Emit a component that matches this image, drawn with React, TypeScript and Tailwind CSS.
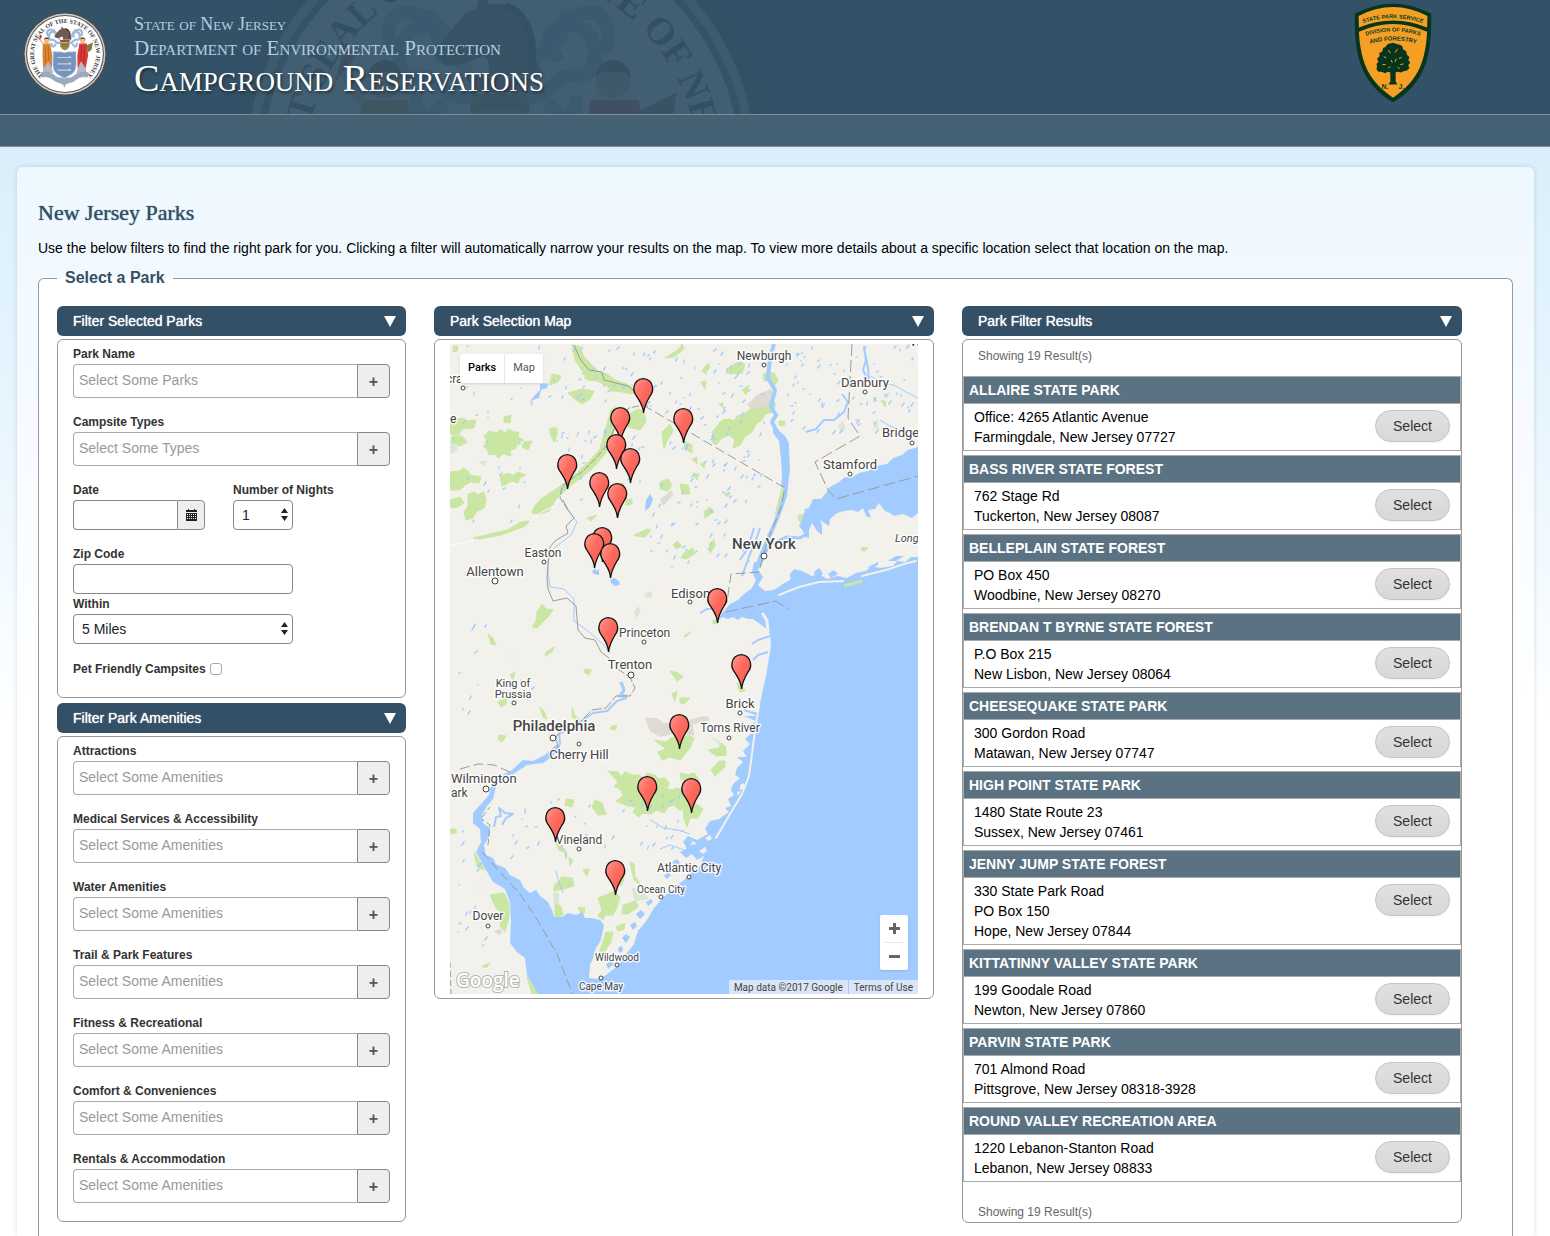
import type { ReactNode } from "react";

interface Park { name: string; lines: string[]; }

const PARKS: Park[] = [
  { name: "ALLAIRE STATE PARK", lines: ["Office: 4265 Atlantic Avenue", "Farmingdale, New Jersey 07727"] },
  { name: "BASS RIVER STATE FOREST", lines: ["762 Stage Rd", "Tuckerton, New Jersey 08087"] },
  { name: "BELLEPLAIN STATE FOREST", lines: ["PO Box 450", "Woodbine, New Jersey 08270"] },
  { name: "BRENDAN T BYRNE STATE FOREST", lines: ["P.O Box 215", "New Lisbon, New Jersey 08064"] },
  { name: "CHEESEQUAKE STATE PARK", lines: ["300 Gordon Road", "Matawan, New Jersey 07747"] },
  { name: "HIGH POINT STATE PARK", lines: ["1480 State Route 23", "Sussex, New Jersey 07461"] },
  { name: "JENNY JUMP STATE FOREST", lines: ["330 State Park Road", "PO Box 150", "Hope, New Jersey 07844"] },
  { name: "KITTATINNY VALLEY STATE PARK", lines: ["199 Goodale Road", "Newton, New Jersey 07860"] },
  { name: "PARVIN STATE PARK", lines: ["701 Almond Road", "Pittsgrove, New Jersey 08318-3928"] },
  { name: "ROUND VALLEY RECREATION AREA", lines: ["1220 Lebanon-Stanton Road", "Lebanon, New Jersey 08833"] },
];

const AMENITIES = [
  "Attractions",
  "Medical Services & Accessibility",
  "Water Amenities",
  "Trail & Park Features",
  "Fitness & Recreational",
  "Comfort & Conveniences",
  "Rentals & Accommodation",
];

// pin tips in map units
const PINS = [
  [643, 413], [620, 442], [683, 443], [616, 469], [630, 483], [567, 489], [599, 507],
  [617, 518], [602, 562], [594, 568], [610, 578], [608, 652], [717, 623], [741, 689],
  [679, 749], [647, 811], [691, 813], [555, 842], [615, 895],
];

type Anchor = "start" | "middle";
interface Place { t: string; x: number; y: number; s: number; a?: Anchor; w?: number; it?: boolean; dot?: number[]; }

const PLACES: Place[] = [
  { t: "Newburgh", x: 764, y: 360, s: 12, dot: [764, 365] },
  { t: "Danbury", x: 865, y: 387, s: 13, dot: [865, 392] },
  { t: "Bridge", x: 882, y: 437, s: 13, a: "start", dot: [912, 443] },
  { t: "Stamford", x: 850, y: 469, s: 13, dot: [850, 474] },
  { t: "New York", x: 764, y: 549, s: 15, w: 500, dot: [764, 556, 3] },
  { t: "Long", x: 895, y: 542, s: 11, a: "start", it: true },
  { t: "cra", x: 446, y: 383, s: 12, a: "start", dot: [463, 388] },
  { t: "e", x: 450, y: 423, s: 12, a: "start" },
  { t: "W", x: 910, y: 346, s: 13, a: "start" },
  { t: "Easton", x: 543, y: 557, s: 12, dot: [544, 562] },
  { t: "Allentown", x: 495, y: 576, s: 13, dot: [495, 581, 3] },
  { t: "Edison", x: 671, y: 598, s: 13, a: "start", dot: [690, 602] },
  { t: "Princeton", x: 619, y: 637, s: 12, a: "start", dot: [644, 642] },
  { t: "Trenton", x: 630, y: 669, s: 13, dot: [631, 675, 3] },
  { t: "King of", x: 513, y: 687, s: 11 },
  { t: "Prussia", x: 513, y: 698, s: 11, dot: [514, 703] },
  { t: "Philadelphia", x: 554, y: 731, s: 15, w: 500, dot: [553, 738, 3] },
  { t: "Cherry Hill", x: 579, y: 759, s: 13, dot: [579, 744] },
  { t: "Wilmington", x: 451, y: 783, s: 13, a: "start", dot: [486, 789, 3] },
  { t: "ark", x: 451, y: 797, s: 12, a: "start" },
  { t: "Brick", x: 740, y: 708, s: 13, dot: [740, 713] },
  { t: "Toms River", x: 730, y: 732, s: 12, dot: [729, 738] },
  { t: "Vineland", x: 579, y: 844, s: 12, dot: [579, 849] },
  { t: "Atlantic City", x: 689, y: 872, s: 12, dot: [689, 877] },
  { t: "Ocean City", x: 661, y: 893, s: 10, dot: [661, 897] },
  { t: "Dover", x: 488, y: 920, s: 12, dot: [488, 926] },
  { t: "Wildwood", x: 617, y: 961, s: 10, dot: [617, 965] },
  { t: "Cape May", x: 601, y: 990, s: 10, dot: [601, 978] },
];

const GREENS = [
  // northwest woods
  "M572 345l8 2 4 10 8 8 6 6 9 3 8 6 12 4 8 6 -3 4 -9 -2 -9 -1 -9 -6 -8 -4 -9 -1 -5 -8 -8 -12z",
  "M611 410l5-3 4 10 -6 14 -8 22 -14 16 -18 14 -18 16 -7 12 -8 3 -9-1 2-6 7-8 18-12 18-14 14-14 9-10z",
  "M628 415l10-6 6 3 2 10 -6 8 -8-2 -10-3z",
  "M568 393l14-4 12 2 -4 8 -8 5 -6-4z", "M552 374l9 2 -3 6 -8 3z", "M585 374l8 0 -2 6 -6-1z", "M606 383l11 3 -5 6z",
  "M450 420l12-2 6 3 8-1 -2 8 -12 1 -3 6 -9-1z", "M452 436l10 0 5 6 -7 4 -9-3z",
  "M484 436l5-5 7 2 4-3 6 3 2-4 6 3 5 0 -1 5 6 3 -6 3 -3 6 -5 1 1 6 -8-2 -5 4 -3-4 -6 1 -2-6 -4-3 5-3z",
  "M504 417l7-2 -1 8 -6-1z", "M550 428l7 0 0 7 -3 7 -4-8z", "M524 442l8-1 -4 9 -6-3z",
  "M450 472l10-1 3-3 5 3 2 4 11 2 -2 6 -8-1 -6 3 -5 5 -10 0z",
  "M468 494l7-2 2 3 7-3 2 8 -2 8 -8 4 -3 6 -7 2 -2-8 4-6z", "M500 476l10-3 2 3 6-4 8 3 -6 3 -2 5 -6-2 -10 5z",
  "M450 500l10-3 4 6 -8 5 -6-1z",
  "M473 538l34-8 14-8 9-1 -5 5 -24 9 -22 4z",
  "M537 612l5-8 4 5 7 1 -6 8 -10 10 -5-1 4-6z", "M488 634l5 4 3 7 -5-1z", "M546 652l8-5 -2 5 -7 4z",
  "M453 346l5 0 -1 5 -4 1z", "M520 358l6-2 1 5z",
  // north central
  "M665 358l14-9 3-5 2 5 -10 8z", "M662 432l8-8 3 7 -6 10 -3 8z", "M684 441l8 4 0 8 -7-4z", "M660 482l8-3 4 6 -4 6 -8-2z",
  "M680 484l8 1 2 9 -8 0z", "M634 535l13-6 4 1 -6 7 -8-1z", "M673 545l4-4 5 5 -6 3z", "M684 553l9-5 2 6 -9 5 -5-1z",
  "M587 518l10-3 -6 6z", "M618 484l6-1 -2 5z", "M626 500l6-1 0 5 -6 1z", "M704 512l6-5 4 5 -9 6z", "M709 545l5-6 1 7 -5 7z",
  "M701 382l5-1 -1 8z", "M719 404l4-1 0 5z", "M726 369l12-7 7 2 -3 9 -12 1z", "M702 371l6-8 2 5 -5 5z", "M742 390l7-5 -3 10z",
  "M712 432l7-8 3-4 8-1 4 2 3-5 6-1 6-5 5-6 8-2 6-4 8 6 -3 8 -8 2 -3 6 -6 4 -4 8 -7 5 -5 8 -7 3 2-8 -6-5 -7 3 -6 7 -4-3 2-6z",
  "M764 373l10 0 4 7 -5 8 -3-7 -7-2z", "M779 421l6 0 -1 5 -5-1z", "M881 400l5 2 -1 5z", "M798 516l6-2 0 8 -5-1z", "M860 503l6-1 -1 6 -4 0z",
  "M862 547l6 1 -3 3 -4-1z", "M906 562l12-5 0 3z", "M782 488l2 0 -3 15 -6 12z",
  "M692 459l5-2 0 7z", "M700 464l5-2 -1 6z", "M722 492l7 2 -1 3z", "M693 473l6 1 -2 6z",
  // south
  "M572 708l3 8 5 4 -3 3 -5-7z", "M540 707l4 4 3 8 -4-2z", "M585 669l6 1 -2 5 -5-3z", "M498 702l9-5 -1 7 -5 3z", "M612 726l5-1 -2 5 -5-1z",
  "M499 735l7 1 -4 6 -4-3z", "M510 675l5-3 -2 8z", "M670 671l8 2 5 4 -6 4z", "M680 698l10 0 -6 6 -4-1z", "M672 694l5-3 -2 10z",
  "M654 740l12 2 6-5 8 4 8-6 6 3 -4 10 -10 12 -10-3 -8 3 -4-8 8-3z",
  "M608 771l10 1 3 5 4-5 8 3 6 0 5 3 3-5 8 2 4 4 6-1 4 5 -2 6 6 1 3-2 6 1 3 4 6 0 -2 5 3 5 -5 6 -8 1 -5-5 -6 2 -4 6 -7-3 -6 4 -9-1 -3 4 -6-5 3-5 -8-1 -12-5 7-5 -2-6 -7-4 4-4z",
  "M683 807l5-8 7 4 8 6 -5 9 -8 0 -3 9 -3-8z", "M708 750l11-2 2-5 5 4 0 8 -10 1z", "M711 770l8-9 6 0 0 6 -10 9z", "M680 773l8 2 6-2 5 6 -10-1 -8 2z",
  "M595 800l7 3 4 11 -8 1 -6-8z", "M566 799l8 1 -2 7 -7-2z", "M555 842l6 2 3 8 -5-2z", "M564 848l3 7 -1 4z",
  "M554 886l8-9 10 1 2 8 -11 3 -9 2z", "M555 902l6 5 2 8 -8 3z", "M578 907l7 1 -2 10z", "M583 870l6-1 -2 7z", "M569 857l4 3 -3 6z",
  "M598 898l8-3 8-4 6 6 -3 10 -4 8 -8 0 -2 5 -5-4 4-6z", "M623 905l13-4 2 6 -10 7 -6 0z", "M616 927l9-4 -1 6 -6 2z", "M606 932l7 0 -2 10 -8 12 -5 1 4-10z",
  "M612 884l12-6 -2 7z", "M630 862l4 2 1 12 5 8 -6-4z",
  "M490 895l14-2 5 10 0 14 -4 15 -5-6 3-12 -7-6z", "M474 852l6 10 5 8 -8-3z", "M527 977l11 17 -6 0z", "M450 829l6 0 0 4 -6 1z", "M482 966l8-3 -4 5z",
  "M737 683l4 1 4 7 -5 1z", "M713 620l6 0 -1 3 -5 1z", "M684 636l7-4 -5 5z",
];

const TOWNLAND = [
  "M747 405l10-10 14-6 3 6 -8 12 -14 2z", "M660 499l12-9 1 5 -10 11z", "M645 718l12 0 6 5 12 0 14-3 14-4 6 1 0 4 -16 3 1 12 -14-4 -20 5 -10-6z",
  "M494 931l6-2 3 4 -4 2z",
];

const PALE = [
  "M838 425l5-4 3 8 -5 4z", "M873 421l5-1 0 9 -4-1z", "M634 611l4-5 3 6 -5 6z", "M644 594l8-3 0 6 -6 1z", "M631 887l12 4 6 8 -14 2z", "M553 892l6 1 0 12 -5-1z",
  "M708 734l12 8 1 4z", "M450 445l7-2 0 8 -7 3z", "M478 462l9-2 -2 6z",
];

const OCEAN = [
  // Raritan Bay and the Jersey shore
  "M717 622L722 617L728 619L733 617L738 620L742 617L748 619L753 619L760 624L767 629L770 634L771 645L769 658L766 676L762 694L758 713",
  // mainland side of Barnegat Bay
  "L751 711L756 716L744 716L756 721L750 726L753 732L745 739L750 744L743 751L747 757L737 757L743 762L737 768L735 775L740 778L733 784L731 790L734 795L728 799L731 806L725 808L729 812L719 819L710 821L705 829L708 834L697 840L688 836",
  // Great Bay down to Cape May
  "L683 842L688 848L680 852L686 858L692 854L697 860L704 856L700 866L692 872L684 880L672 889L662 899L654 908L647 920L638 931L634 944L624 957L616 967L606 975L598 979L589 978",
  // Delaware Bay, east side
  "L590 965L593 958L596 948L600 942L602 935L604 925L600 920L592 918L585 918L582 912L576 915L568 913L562 917L554 917L552 910L548 902L540 896L536 890L530 893L524 888L520 880L510 875L505 868L496 864L493 858L486 855",
  // up the Delaware to Philadelphia
  "L484 845L489 837L490 828L483 823L482 815L487 806L493 799L496 787L500 778L512 775L527 765L543 763L552 757L560 749L556 745L545 755L533 761L523 760L512 770L500 776L490 788L489 795L480 805L473 813L473 823L480 829L481 842L476 852",
  // Delaware Bay, west side
  "L483 865L493 882L505 889L510 902L511 922L510 943L517 952L525 958L527 975L538 994L918 994L918 557",
  // south shore of Long Island and the harbour
  "L911 557L905 562L897 561L893 566L880 568L872 566L866 571L856 573L847 578L838 576L827 579L819 574L812 576L804 572L793 573L790 580L783 584L774 590L765 591L758 585L763 577L758 570L762 562L754 562L752 572L756 580L752 588L744 594L738 600L730 604L722 613Z",
].join("");

const SOUND =
  "M918 447l-10 3 -6 5 -9 3 -6 6 -11 2 -8 5 -9 2 -8 5 -6-1 -6 5 -9 5 -4 6 -5 6 -8 0 -4 9 -4 1 -2 9 -4 8 4 5 2 6 4 1 0-8 3-7 5 8 5 4 0-10 -2-5 9 6 1-7 7-6 7-2 8-1 6 2 5-4 3 8 5 2 -3-8 7-1 4-6 6 8 5 2 4 3 9-2 9 4 6-5z";

const HUDSON = "M774 344l-4 14 -2 20 7 12 -4 17 5 8 -4 7 5 10 8 8 2 8 1 20 -3 28 -9 25 -12 27 -6 16";

const HUDSON_WIDE = "M773 425l6 6 6 5 4 7 0 25 -3 20 -5-1 1-12 -1-16 -2-18 -6-8z";

// inland lakes and streams, scattered the same way on every render
function lakes() {
  const out: string[] = [];
  let seed = 7;
  const rnd = () => { seed = (seed * 16807) % 2147483647; return seed / 2147483647; };
  const scatter = (n: number, x: number, y: number, w: number, h: number) => {
    for (let i = 0; i < n; i++) {
      const px = Math.round(x + rnd() * w);
      const py = Math.round(y + rnd() * h);
      const a = Math.ceil(rnd() * 3);
      const b = Math.ceil(rnd() * 4);
      out.push(`M${px} ${py}l${a} ${-b}l1 1l${-a} ${b}z`);
    }
  };
  scatter(60, 453, 346, 170, 100);
  scatter(110, 625, 348, 140, 160);
  scatter(70, 785, 346, 130, 90);
  scatter(35, 650, 500, 100, 70);
  scatter(20, 453, 440, 130, 90);
  scatter(25, 590, 790, 100, 60);
  scatter(20, 510, 800, 80, 60);
  scatter(16, 455, 830, 30, 130);
  scatter(14, 455, 600, 90, 130);
  return out.join("");
}

const LAKES = lakes();

function ParkMap() {
  return (
    <svg viewBox="450 344 468 650" className="block w-full" role="img" aria-label="Map of New Jersey state parks">
      <defs>
        <linearGradient id="pin" x1="0" y1="0" x2="1" y2="1">
          <stop offset="0" stopColor="#ff9a90" />
          <stop offset="0.45" stopColor="#fd6a5f" />
          <stop offset="1" stopColor="#f8574c" />
        </linearGradient>
      </defs>
      <rect x="450" y="344" width="468" height="650" fill="#f2f1ec" />
      <g fill="#cae6a3" stroke="#cae6a3" strokeWidth="1" strokeLinejoin="round">
        {GREENS.map((d, i) => <path key={i} d={d} />)}
      </g>
      <g fill="#dfdad2">{TOWNLAND.map((d, i) => <path key={i} d={d} />)}</g>
      <g fill="#dbe6d4">{PALE.map((d, i) => <path key={i} d={d} />)}</g>

      <g fill="#a2ccff">
        <path d={OCEAN} />
        <path d={SOUND} />
        <path d={HUDSON_WIDE} />
        <path d={LAKES} />
        <path d="M610 580l4-2 5 3 1 4 -5 1 -4-3z M592 572l3-4 2 3 2-2 0 6 -5-1z" />
        <path d="M535 395l5-5 0-6 9-1 1-5 -3 10 -6 2 -2 8 -6 2 -4 3z" />
        <path d="M646 500l4-6 3 5 -3 8 -5 4z" />
      </g>
      <g fill="none" stroke="#a2ccff" strokeLinejoin="round">
        <path d={HUDSON} strokeWidth="4" />
        <path d="M808 533l-8 5 -14-1 -8 4 -8 4 -5 8 -6 14" strokeWidth="3" />
        <path d="M742 576l8-22 6-14 4-12 M740 560l8-12 6-20" strokeWidth="2" />
        <path d="M715 609l-8 0 -7 4" strokeWidth="2" />
        <path d="M864 346l2 14 -3 10 6 12 -1-14 -4-20 M806 432l10-3 8-9 10 0 10-8 4-10 -6-8" strokeWidth="2" />
        <path d="M870 376l12 6 14 4 10 6 12 6 M880 420l10 6 14 6" strokeWidth="1" />
        <path d="M558 750l2-8 -1-8 6-3 13-5 5-6 10-7 14-2 10-10 10-3" strokeWidth="2" />
        <path d="M621 682l3 8 -4 6 7 0" strokeWidth="3" />
        <path d="M494 827l2-10 5-1 -2-8 6 5 8 1 -7 4 -4 7" strokeWidth="2" />
        <path d="M756 714l-12-4 M770 636l-12 4 -6 4 M768 652l-10 3 -5 5" strokeWidth="2" />
        <path d="M690 834l-12-4 -14-2 -14-8 M684 850l-14-5 -10 4 M563 893l-5-14 -2-8" strokeWidth="1" />
        <path d="M568 510l9 12 -6 13 -18 14 -5 12 0 12 2 14 14 2 10 10 0 22 14 10 16 14 6 8" strokeWidth="1" />
      </g>

      {/* barrier islands */}
      <g fill="none" stroke="#f2f1ec" strokeLinecap="round">
        <path d="M763 614l4 7 1 10" strokeWidth="3" />
        <path d="M759 706l-4 24 -3 24 -3 22 -7 18 -12 20 -14 24" strokeWidth="2" />
        <path d="M779 595l20-8 20-5 24-1 M862 576l24-6 18-6 12-3" strokeWidth="2" />
      </g>
      <path d="M844 586l18-5" stroke="#cae6a3" strokeWidth="3" />
      <g fill="#a2ccff">
        <path d="M790 574l4-5 8 2 6 5 -4 6 -8 2 -5-3z M814 572l5-4 4 5 -3 5 -5-1z M828 574l6-4 4 4 -7 4z M868 567l10-5 0 3 -8 4z M888 561l8-5 8 0 -8 5z" />
        <path d="M636 914l5-4 4 4 -5 5z M630 925l5-3 2 4 -4 4z M622 938l4-4 4 3 -4 6z M618 948l4-2 1 5 -4 2z M606 964l5-3 3 3 -6 5z M646 902l5-3 2 3 -5 4z M684 842l8-2 2 6 -7 4z M672 862l5-3 4 5 -6 3z M664 876l4-4 3 3 -4 4z" />
      </g>
      <g fill="#f2f1ec">
        <path d="M705 838l5-3 2 4 -4 2z M699 851l6-4 2 4 -4 3z M690 845l3-4 4 3z M740 785l4-2 1 5 -5 2z M737 792l4-1 -3 5z" />
      </g>

      {/* state lines */}
      <g fill="none" stroke="#9b9b9b" strokeWidth="1">
        <path d="M574 345l6 14 9 11 13 2 2 8 12 3 12 3 6 5" />
        <path d="M568 510l-8-12 2-12 8-6 12-8 14-14 12-14 8-20 4-8 9-8 14-3 8 1" strokeDasharray="7 2" />
        <path d="M563 500l5 10 6 8 -8 8 2 7 -13 8 -5 6 -2 18 -1 14 1 10 5 12 14-3 9 8 2 24 7 8 10 2 6 12 12 9" />
        <path d="M616 668l14 9 5 11 -5 8 -14 0 -10 12 -14 2 -12 12 -16 5 -8 10 2 12" strokeDasharray="10 2" />
        <path d="M643 405l142 83 -4 20 -14 34 -8 30 -28 2 -4 28" strokeDasharray="10 4" />
        <path d="M852 344l-4 74 12 18 -45 26 13 28 8 9 82-23" strokeDasharray="12 4" />
        <path d="M726 612l50-11 12 8" strokeDasharray="12 4" />
        <path d="M460 769l18-5 16 1 18 8 M482 852l18 20 20 22 15 22 22 38 14 36 3 6" strokeDasharray="10 4" />
        <path d="M482 817l8-10 M488 845l2-20 -8-6" strokeDasharray="6 3" />
        <path d="M450 962l1 32" strokeDasharray="6 3" />
      </g>
      <path d="M450 546l24-6 M530 521l14-10 10-5" fill="none" stroke="#ffffff" strokeWidth="1" />

      <g fontFamily="Roboto, sans-serif" fill="#464646" stroke="#ffffff" strokeWidth="3" strokeLinejoin="round" paintOrder="stroke">
        {PLACES.map(p => (
          <text key={p.t} x={p.x} y={p.y} fontSize={p.s} fontWeight={p.w ?? 400} fontStyle={p.it ? "italic" : "normal"}
            textAnchor={p.a ?? "middle"} strokeOpacity="0.8">{p.t}</text>
        ))}
      </g>
      <g fill="#ffffff" stroke="#444444" strokeWidth="1">
        {PLACES.map(p => p.dot && <circle key={p.t} cx={p.dot[0]} cy={p.dot[1]} r={p.dot[2] ?? 2} />)}
      </g>

      {PINS.map(([x, y]) => (
        <path key={`${x}-${y}`} transform={`translate(${x} ${y})`}
          d="M.5 0C.5-7-3-11-6.5-17C-9-20-9.500-23-9-26A9.300 9.300 0 0 1 9.500-26C10-23 9.500-20 7-17C3.500-11 1.200-7 .5 0Z"
          fill="url(#pin)" stroke="#111111" strokeWidth="1.300" />
      ))}
      <text x="456" y="987" fontFamily="'Open Sans', sans-serif" fontSize="19" fontWeight="600" fill="#ffffff"
        stroke="#9a9a9a" strokeWidth="2" strokeOpacity="0.7" paintOrder="stroke">Google</text>
    </svg>
  );
}

function Seal({ id, className }: { id: string; className: string }) {
  return (
    <svg viewBox="-265 -265 530 530" className={className} aria-hidden="true">
      <defs><path id={id} d="M0 196A196 196 0 1 1 1 196" /></defs>
      <circle r="264" fill="#4c4c4c" />
      <circle r="255" fill="#cfcfcf" />
      <circle r="246" fill="#5b5b5b" />
      <circle r="239" fill="#ffffff" />
      <text fontFamily="'Liberation Serif', serif" fontWeight="700" fontSize="38" fill="#3c3c3c" textAnchor="middle">
        <textPath href={`#${id}`} startOffset="50%">THE GREAT SEAL OF THE STATE OF NEW JERSEY</textPath>
      </text>
      {/* mantling */}
      <g fill="none" stroke="#9fb9d8" strokeWidth="14" strokeLinecap="round">
        <path d="M-30-70C-60-60-60-95-85-90S-105-135-80-140S-45-125-60-110" />
        <path d="M-35-95C-45-120-65-115-70-150M-110-120C-120-150-95-160-80-150M-60-60C-70-40-85-45-85-65" />
        <path d="M20-70C50-60 50-95 75-90S100-135 75-140S40-125 55-110" />
        <path d="M25-95C40-120 60-115 65-150M105-120C115-150 90-160 75-150M50-60C60-40 75-45 75-65" />
      </g>
      {/* horse head and helmet */}
      <path d="M-66-112C-60-126-46-140-36-152L-24-158L-20-176L-12-162C18-164 36-142 34-112C34-104 38-96 44-92L-14-90C-10-100-12-106-18-110C-34-102-52-98-58-102Z" fill="#6d5b52" />
      <path d="M4-160C28-152 34-124 30-96" fill="none" stroke="#4b3c36" strokeWidth="8" />
      <path d="M-34-88H32L26-74H-28Z" fill="#b9442f" />
      <path d="M-28-72H26C34-50 24-30 0-22C-26-30-36-50-28-72Z" fill="#9a8a4a" />
      <path d="M-20-60H18M-20-48H18" stroke="#6d5f2e" strokeWidth="4" />
      {/* Liberty */}
      <circle cx="-116" cy="-84" r="17" fill="#e8bb93" />
      <path d="M-134-88C-132-112-100-112-98-88L-104-94H-128Z" fill="#7a4b2a" />
      <path d="M-140-66H-94L-80 10L-84 92H-138L-142 10Z" fill="#dc8431" />
      <path d="M-126-50L-120 88M-106-50L-100 88" stroke="#b4611d" strokeWidth="5" />
      <path d="M-138-62L-158-96L-152-108" fill="none" stroke="#e8bb93" strokeWidth="10" />
      <path d="M-166-84L-156-122L-144-112Z" fill="#cf2a27" />
      {/* Ceres */}
      <circle cx="112" cy="-84" r="17" fill="#e8bb93" />
      <path d="M94-88C96-112 128-112 130-88L124-94H100Z" fill="#7a4b2a" />
      <path d="M90-66H138L146 10L130 92H80L78 10Z" fill="#db3a35" />
      <path d="M104-50L98 88M122-50L120 60" stroke="#a81f22" strokeWidth="5" />
      <path d="M136-54L176-74L168-28L144-10Z" fill="#7d7a3b" />
      {/* shield */}
      <path d="M-138 94L-104 44L-72 122H-142Z M132 94L100 44L70 122H138Z" fill="#b4bac8" />
      <path d="M-76-18C-50-8-28-20-4-8C22-20 44-8 70-18C66 10 78 60 66 96C54 128 22 136-4 154C-30 136-62 128-72 96C-84 60-70 10-76-18Z" fill="#6f95c8" stroke="#c7d4e6" strokeWidth="5" />
      <path d="M-48 22H40M-48 62H40M-48 102H40M24 12L36 22M24 52L36 62M24 92L36 102" stroke="#e3cf9d" strokeWidth="7" />
      {/* scroll */}
      <path d="M-152 118C-110 108-80 122-60 140C-34 162-4 140-4 168C-4 140 28 162 54 140C76 122 106 108 148 118L140 146C104 138 84 150 60 168C34 186-4 178-4 210C-4 178-42 186-66 168C-90 150-112 138-146 146Z" fill="#8facd3" stroke="#c98f62" strokeWidth="4" />
    </svg>
  );
}

function ForestryBadge({ className }: { className: string }) {
  const letters = { fontFamily: "'Liberation Sans', sans-serif", fontWeight: 700, fill: "#0b3a20" };
  return (
    <svg viewBox="73 8 234 302" className={className} role="img" aria-label="State Park Service">
      <defs>
        <path id="arc1" d="M84 74Q190 34 296 74" />
        <path id="arc2" d="M88 114Q190 74 292 114" />
        <path id="arc3" d="M100 138Q190 104 280 138" />
      </defs>
      <path d="M75 40Q190-20 305 40C309 170 285 250 190 308C95 250 71 170 75 40Z" fill="#06341c" />
      <path d="M86 47Q190-7 294 47L293 82Q190 40 87 82Z" fill="#f5a024" />
      <path d="M87 95Q190 48 293 95C288 195 258 248 190 294C122 248 92 195 87 95Z" fill="#f5a024" />
      <text fontSize="17" textAnchor="middle" {...letters}><textPath href="#arc1" startOffset="50%">STATE PARK SERVICE</textPath></text>
      <text fontSize="17" textAnchor="middle" {...letters}><textPath href="#arc2" startOffset="50%">DIVISION OF PARKS</textPath></text>
      <text fontSize="18" textAnchor="middle" {...letters}><textPath href="#arc3" startOffset="50%">AND FORESTRY</textPath></text>
      <path d="M190 128l12 4 8 2 8 4 2 10 10 6 2 10 8 8 -4 8 6 8 -6 8 4 8 -8 8 -10 2 -8 4 -10-2 -6 2 0 26 5 10 -27 0 6-9 0-27 -8-2 -8 4 -10-4 -10 0 -6-8 2-8 -2-8 6-6 -4-10 8-8 -2-8 10-6 2-10 8-4 6-8 8-2z" fill="#06341c" />
      <path d="M176 150l6 10 M204 146l-8 12 M162 170l8 4 M216 172l-8 4 M158 194l10 0 M222 192l-10 2 M184 180l4 8 M200 176l-4 10 M176 204l6-4 M210 206l-6-4" stroke="#f5a024" strokeWidth="3" />
      <text x="155" y="268" fontSize="21" {...letters}>N.</text>
      <text x="207" y="268" fontSize="21" {...letters}>J.</text>
    </svg>
  );
}

function Panel({ title, className = "", children }: { title: string; className?: string; children: ReactNode }) {
  return (
    <section className="mb-[5px]">
      <h2 className="mb-[3px] flex h-[30px] items-center justify-between rounded-md bg-[#335066] pr-2.5 pl-4 text-sm font-normal text-white [text-shadow:0_0_1px_#ffffff]">
        {title}
        <svg width="12" height="11" viewBox="0 0 12 11" aria-hidden="true"><path d="M0 0H12L6 11Z" fill="#ffffff" /></svg>
      </h2>
      <div className={`rounded-md border border-[#999999] bg-white ${className}`}>{children}</div>
    </section>
  );
}

function PickerField({ label, placeholder }: { label: string; placeholder: string }) {
  const id = label.toLowerCase().replace(/[^a-z]+/g, "-");
  return (
    <div className="mb-[14px]">
      <label htmlFor={id} className="block text-xs leading-5 font-bold">{label}</label>
      <div className="flex h-[34px]">
        <input id={id} placeholder={placeholder}
          className="min-w-0 flex-1 rounded-l border border-r-0 border-[#aaaaaa] bg-white px-[5px] pb-0.5 text-sm placeholder:text-[#999999]" />
        <button type="button" aria-label={`Add ${label}`}
          className="w-[33px] rounded-r border border-[#888888] bg-[#eeeeee] pt-0.5 text-base font-bold text-[#555555]">+</button>
      </div>
    </div>
  );
}

function SelectBox({ id, options }: { id: string; options: string[] }) {
  return (
    <div className="relative">
      <select id={id} className="h-[30px] w-full appearance-none rounded border border-[#888888] bg-white px-2 text-sm text-[#222222]">
        {options.map(o => <option key={o}>{o}</option>)}
      </select>
      <svg width="7" height="13" viewBox="0 0 7 13" className="pointer-events-none absolute top-2 right-[5px]" aria-hidden="true">
        <path d="M0 5L3.500 0L7 5Z M0 8H7L3.500 13Z" fill="#222222" />
      </svg>
    </div>
  );
}

function CalendarIcon() {
  return (
    <svg width="11" height="12" viewBox="0 0 11 12" aria-hidden="true">
      <path d="M0 1H11V3H0Z M2 0H3V1H2Z M8 0H9V1H8Z M0 4H11V12H0Z" fill="#222222" />
      <path d="M1 5.500H10 M1 7.500H10 M1 9.500H10" stroke="#eeeeee" strokeWidth="1" strokeDasharray="1 1" />
    </svg>
  );
}

function ParkFilters() {
  return (
    <Panel title="Filter Selected Parks" className="px-[15px] pt-1 pb-[18px]">
      <PickerField label="Park Name" placeholder="Select Some Parks" />
      <PickerField label="Campsite Types" placeholder="Select Some Types" />
      <div className="mb-[14px] flex gap-7">
        <div className="w-[132px]">
          <label htmlFor="date" className="block text-xs leading-5 font-bold">Date</label>
          <div className="flex h-[30px]">
            <input id="date" className="min-w-0 flex-1 rounded-l border border-r-0 border-[#888888] bg-white px-2 text-sm" />
            <button type="button" aria-label="Open calendar"
              className="flex w-7 items-center justify-center rounded-r border border-[#888888] bg-[#eeeeee]"><CalendarIcon /></button>
          </div>
        </div>
        <div>
          <label htmlFor="nights" className="block text-xs leading-5 font-bold">Number of Nights</label>
          <div className="w-[60px]"><SelectBox id="nights" options={["1", "2", "3", "4", "5", "6", "7"]} /></div>
        </div>
      </div>
      <div className="mb-[14px] w-[220px]">
        <label htmlFor="zip" className="block text-xs leading-5 font-bold">Zip Code</label>
        <input id="zip" className="block h-[30px] w-full rounded border border-[#888888] bg-white px-2 text-sm" />
        <label htmlFor="within" className="block text-xs leading-5 font-bold">Within</label>
        <SelectBox id="within" options={["5 Miles", "10 Miles", "25 Miles", "50 Miles"]} />
      </div>
      <div className="flex h-[21px] items-center gap-1">
        <label htmlFor="pets" className="text-xs font-bold">Pet Friendly Campsites</label>
        <input id="pets" type="checkbox" className="size-3 appearance-none rounded-[3px] border border-[#aaaaaa] bg-white" />
      </div>
    </Panel>
  );
}

function MapPanel() {
  return (
    <Panel title="Park Selection Map" className="px-[15px] py-1">
      <div className="relative overflow-hidden font-[Roboto,sans-serif]">
        <ParkMap />
        <div className="absolute top-2.5 left-2.5 flex h-[29px] rounded-xs bg-white text-[11px] shadow">
          <button type="button" className="border-r border-[#e6e6e6] px-2 font-medium text-black">Parks</button>
          <button type="button" className="px-2 text-[#565656]">Map</button>
        </div>
        <div className="absolute right-2.5 bottom-6 flex h-[55px] w-7 flex-col items-center rounded-xs bg-white shadow">
          <button type="button" aria-label="Zoom in" className="flex w-full flex-1 items-center justify-center">
            <svg width="11" height="11" viewBox="0 0 11 11"><path d="M4 0H7V4H11V7H7V11H4V7H0V4H4Z" fill="#666666" /></svg>
          </button>
          <div className="h-px w-5 bg-[#e6e6e6]" />
          <button type="button" aria-label="Zoom out" className="flex w-full flex-1 items-center justify-center">
            <svg width="11" height="3" viewBox="0 0 11 3"><path d="M0 0H11V3H0Z" fill="#666666" /></svg>
          </button>
        </div>
        <div className="absolute right-0 bottom-0 flex h-[14px] items-center bg-[#dae6f7] text-[10px] text-[#444444]">
          <span className="px-[5px]">Map data ©2017 Google</span>
          <a href="#terms" className="border-l border-[#a2ccff] px-[5px]">Terms of Use</a>
        </div>
      </div>
    </Panel>
  );
}

function ParkCard({ park }: { park: Park }) {
  return (
    <article className="mb-1 border border-[#aaaaaa]">
      <h3 className="flex h-[27px] items-center border-b border-[#aaaaaa] bg-[#5b7282] pl-[5px] text-sm font-bold text-white">{park.name}</h3>
      <div className="flex items-start justify-between pr-2.5 pl-2.5">
        <address className="py-[3px] text-sm leading-5 text-black not-italic">
          {park.lines.map(line => <div key={line}>{line}</div>)}
        </address>
        <button type="button" aria-label={`Select ${park.name}`}
          className="mt-1.5 h-8 w-[75px] rounded-full border border-[#c4c4c4] bg-linear-to-b from-[#e0e0e0] to-[#d8d8d8] text-sm text-[#333333] shadow-xs">Select</button>
      </div>
    </article>
  );
}

export default function App() {
  return (
    <div className="bg-[linear-gradient(#daeffb_147px,#e6f5fe_400px,#ffffff_720px)] font-['Liberation_Sans',Arial,sans-serif] text-[#333333]">
      <header className="relative flex h-[114px] items-start overflow-hidden bg-[#335267] pr-[118px] pl-[23px]">
        <Seal id="watermark" className="absolute top-[-99px] left-[236px] size-[530px] opacity-7" />
        <Seal id="seal" className="relative mt-3 size-[84px] shrink-0" />
        <div className="relative ml-[27px] flex-1 font-['Liberation_Serif',serif] whitespace-nowrap [font-variant-caps:small-caps]">
          <p className="mt-3 text-lg leading-6 text-[#b4cfe0]">State of New Jersey</p>
          <p className="text-[21px] leading-6 text-[#b4cfe0]">Department of Environmental Protection</p>
          <p className="text-[38px] leading-9 text-white [text-shadow:1px_2px_3px_rgba(0,0,0,0.5)]">Campground Reservations</p>
        </div>
        <ForestryBadge className="relative mt-[3px] h-[100px] w-[78px] shrink-0" />
      </header>
      <nav className="h-[33px] border-y border-[#7b8f9b] bg-[#456275]" />

      <main className="mx-4 mt-5 ml-[17px] rounded-t-md bg-[linear-gradient(#eef8ff,#f8fbff_300px,#ffffff_530px)] px-[21px] pt-[34px] shadow-[0_0_5px_rgba(80,120,150,0.25)]">
        <h1 className="font-['Liberation_Serif',serif] text-[22px] leading-6 text-[#335066] [text-shadow:0_0_1px_#335066]">New Jersey Parks</h1>
        <p className="mt-[11px] text-sm leading-6 text-black">
          Use the below filters to find the right park for you. Clicking a filter will automatically narrow your results on the map. To view more details about a specific location select that location on the map.
        </p>
        <fieldset className="mt-1.5 min-w-0 rounded-t-md border border-b-0 border-[#999999] bg-white pr-[50px] pb-2 pl-[18px]">
          <legend className="px-2 text-base leading-6 font-bold text-[#335066]">Select a Park</legend>
          <div className="mt-4 grid grid-cols-[349fr_500fr_500fr] items-start gap-7">
            <div>
              <ParkFilters />
              <Panel title="Filter Park Amenities" className="px-[15px] pt-1 pb-1">
                {AMENITIES.map(a => <PickerField key={a} label={a} placeholder="Select Some Amenities" />)}
              </Panel>
            </div>
            <MapPanel />
            <Panel title="Park Filter Results">
              <p className="px-[15px] pt-1.5 pb-2.5 text-xs leading-5 text-[#666666]">Showing 19 Result(s)</p>
              {PARKS.map(p => <ParkCard key={p.name} park={p} />)}
              <p className="px-[15px] pt-4 text-xs leading-5 text-[#666666]">Showing 19 Result(s)</p>
            </Panel>
          </div>
        </fieldset>
      </main>
    </div>
  );
}
